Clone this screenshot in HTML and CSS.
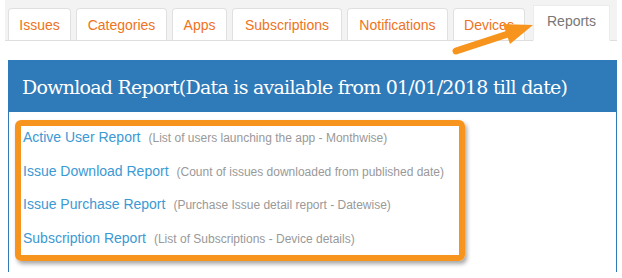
FILE: index.html
```html
<!DOCTYPE html>
<html lang="en">
<head>
  <meta charset="UTF-8" />
  <title>Reports</title>
  <link rel="stylesheet" href="styles.css">
</head>
<body>

<nav class="tabs">
  <a class="tab">Issues</a>
  <a class="tab">Categories</a>
  <a class="tab">Apps</a>
  <a class="tab">Subscriptions</a>
  <a class="tab">Notifications</a>
  <a class="tab">Devices</a>
  <a class="tab active">Reports</a>
</nav>

<svg class="pointer" viewBox="440 10 100 50" width="100" height="50">
  <line x1="456" y1="51" x2="508" y2="34" stroke="#f7941d" stroke-width="7" stroke-linecap="round"/>
  <polygon points="503,24 533,25 510,44" fill="#f7941d"/>
</svg>

<section class="panel">
  <div class="panel-heading">Download Report(Data is available from 01/01/2018 till date)</div>
  <div class="panel-body">
    <div class="report-box">
      <div class="report-row"><a class="report-link">Active User Report</a><span class="report-desc">(List of users launching the app - Monthwise)</span></div>
      <div class="report-row"><a class="report-link">Issue Download Report</a><span class="report-desc">(Count of issues downloaded from published date)</span></div>
      <div class="report-row"><a class="report-link">Issue Purchase Report</a><span class="report-desc">(Purchase Issue detail report - Datewise)</span></div>
      <div class="report-row"><a class="report-link">Subscription Report</a><span class="report-desc">(List of Subscriptions - Device details)</span></div>
    </div>
  </div>
</section>

</body>
</html>
```

FILE: styles.css
```css
* {
  box-sizing: border-box;
}

body {
  margin: 0;
  background: #fff;
  font-family: "Liberation Sans", Arial, sans-serif;
  position: relative;
}

.tabs {
  display: flex;
  align-items: flex-end;
  gap: 5px;
  margin-left: 5px;
  width: 612px;
  height: 41px;
  padding-left: 3px;
  background: #f3f3f3;
  border-bottom: 1px solid #dedede;
}

.tab {
  height: 33px;
  margin-bottom: -1px;
  padding: 0 11px;
  display: flex;
  align-items: center;
  justify-content: center;
  background: #fff;
  border: 1px solid #e0e0e0;
  border-bottom: 1px solid #dedede;
  border-radius: 4px 4px 0 0;
  color: #ee7320;
  font-size: 14px;
  cursor: pointer;
}

.tab:nth-child(1) { width: 63px; }
.tab:nth-child(2) { width: 91px; }
.tab:nth-child(3) { width: 55px; }
.tab:nth-child(4) { width: 110px; }
.tab:nth-child(5) { width: 101px; }
.tab:nth-child(6) { width: 72px; }

.tab.active {
  width: 77px;
  height: 36px;
  margin-left: 3px;
  padding-bottom: 5px;
  color: #777;
  border-color: #ececec;
  border-bottom-color: #fff;
  border-radius: 0;
}

.pointer {
  position: absolute;
  left: 440px;
  top: 10px;
}

.panel {
  margin: 19px 5px 0 8px;
  border: 1px solid #2f7ab8;
  border-bottom: none;
}

.panel-heading {
  height: 51px;
  padding-left: 13px;
  display: flex;
  align-items: center;
  background: #2f7ab8;
  color: #fff;
  font-family: "DejaVu Serif", Georgia, serif;
  font-size: 19px;
  letter-spacing: -0.75px;
}

.panel-body {
  padding: 8px 0 11px 6px;
}

.report-box {
  width: 450px;
  height: 141px;
  border: 6px solid #f7941d;
  border-radius: 6px;
  box-shadow: 2px 3px 4px rgba(0, 0, 0, 0.35);
  padding: 2px 2px 0 2px;
  display: flex;
  flex-direction: column;
  gap: 15.6px;
}

.report-row {
  height: 18px;
  line-height: 18px;
  white-space: nowrap;
}

.report-link {
  color: #3b99d4;
  font-size: 14px;
  margin-right: 8px;
}

.report-desc {
  color: #999;
  font-size: 12px;
}
```
